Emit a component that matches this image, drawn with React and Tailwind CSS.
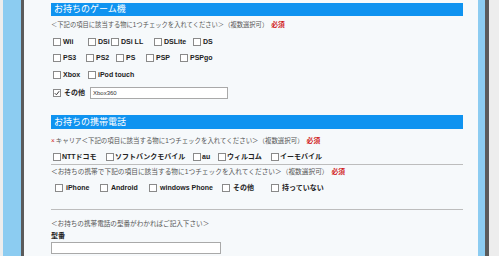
const FONT = { fontFamily: '"Liberation Sans", "Noto Sans CJK JP", sans-serif' };

function Box({ checked }) {
  return (
    <span className="inline-flex h-[8px] w-[8px] shrink-0 items-center justify-center border border-[#8a8a8a] bg-white">
      {checked && (
        <svg width="6" height="6" viewBox="0 0 6 6" fill="none" stroke="#3a3a3a" strokeWidth="1">
          <path d="M0.8 3.2 2.4 4.8 5.2 1.2" />
        </svg>
      )}
    </span>
  );
}

function Check({ label, w, gap = "ml-[2px]", checked }) {
  return (
    <span className="flex shrink-0 items-center" style={w ? { width: w } : undefined}>
      <Box checked={checked} />
      <span className={`${gap} whitespace-nowrap text-[7px] font-bold text-[#222]`}>{label}</span>
    </span>
  );
}

function Heading({ children, h }) {
  return (
    <div className={`flex ${h} items-center bg-[#0f93f0] pl-[3px] text-[9px] leading-none text-white`}>
      {children}
    </div>
  );
}

function Note({ children, prefix, size = "text-[6.3px]", className = "" }) {
  return (
    <div className={`flex items-center whitespace-nowrap ${size} leading-none text-[#555] ${className}`}>
      {prefix && <span className="mr-[1px] text-[#d01818]">×</span>}
      {children}
      <span className="ml-[3px] text-[6.8px] font-bold text-[#d01818]">必須</span>
    </div>
  );
}

export default function App() {
  return (
    <div className="flex h-[256px] w-[499px] overflow-hidden bg-[#ededed]" style={FONT}>
      <div className="w-[3px]" />
      <div className="w-[18px] bg-[#8cccf1]" />
      <div className="w-[3px] bg-[#5b5b5b]" />

      <div className="flex w-[454px] flex-col bg-[#f6f9fb] pl-[27px] pr-[15px] pt-[3px]">
        <Heading h="h-[13px]">お持ちのゲーム機</Heading>

        <Note className="mt-[4px] h-[10px]">＜下記の項目に該当する物に1つチェックを入れてください＞（複数選択可）</Note>

        <div className="flex h-[16px] items-center pl-[2px] mt-[4px]">
          <Check label="Wii" w={35} />
          <Check label="DSi" w={23} />
          <Check label="DSi LL" w={43} />
          <Check label="DSLite" w={39} />
          <Check label="DS" />
        </div>
        <div className="flex h-[16px] items-center pl-[2px]">
          <Check label="PS3" w={33} />
          <Check label="PS2" w={30} />
          <Check label="PS" w={30} />
          <Check label="PSP" w={34} />
          <Check label="PSPgo" />
        </div>
        <div className="flex h-[18px] items-center pl-[2px]">
          <Check label="Xbox" w={35} />
          <Check label="iPod touch" />
        </div>
        <div className="flex h-[18px] items-center pl-[2px]">
          <Check label="その他" w={37} gap="ml-[3px]" checked />
          <div className="flex h-[12px] w-[138px] items-center border border-[#a9a9a9] bg-white pl-[2px] text-[6px] text-[#333]">
            Xbox360
          </div>
        </div>

        <div className="mt-[13px]">
          <Heading h="h-[14px]">お持ちの携帯電話</Heading>
        </div>

        <Note prefix size="text-[6.45px]" className="mt-[7px] h-[10px]">
          キャリア＜下記の項目に該当する物に1つチェックを入れてください＞（複数選択可）
        </Note>

        <div className="mt-[4px] flex h-[14px] items-center pl-[2px]">
          <Check label="NTTドコモ" w={53} gap="ml-[1px]" />
          <Check label="ソフトバンクモバイル" w={87} gap="ml-[1px]" />
          <Check label="au" w={25} gap="ml-[1px]" />
          <Check label="ウィルコム" w={53} gap="ml-[1px]" />
          <Check label="イーモバイル" gap="ml-[1px]" />
        </div>
        <div className="h-px bg-[#bdbdbd]" />

        <Note size="text-[6.7px]" className="h-[14px]">
          ＜お持ちの携帯で下記の項目に該当する物に1つチェックを入れてください＞（複数選択可）
        </Note>

        <div className="mt-[1px] flex h-[16px] items-center pl-[4px]">
          <Check label="iPhone" w={45} gap="ml-[3px]" />
          <Check label="Android" w={49} gap="ml-[3px]" />
          <Check label="windows Phone" w={73} gap="ml-[3px]" />
          <Check label="その他" w={49} gap="ml-[3px]" />
          <Check label="持っていない" gap="ml-[3px]" />
        </div>

        <div className="mt-[13px] h-px bg-[#bdbdbd]" />

        <div className="mt-[8px] flex h-[12px] items-center whitespace-nowrap text-[6.6px] leading-none text-[#555]">
          ＜お持ちの携帯電話の型番がわかればご記入下さい＞
        </div>
        <div className="flex h-[10px] items-center text-[7px] font-bold leading-none text-[#222]">型番</div>
        <div className="mt-[2px] h-[12px] w-[170px] border border-[#a9a9a9] bg-white" />
      </div>

      <div className="w-[7px] bg-[#8cccf1]" />
      <div className="w-[4px] bg-[#5b5b5b]" />
    </div>
  );
}
